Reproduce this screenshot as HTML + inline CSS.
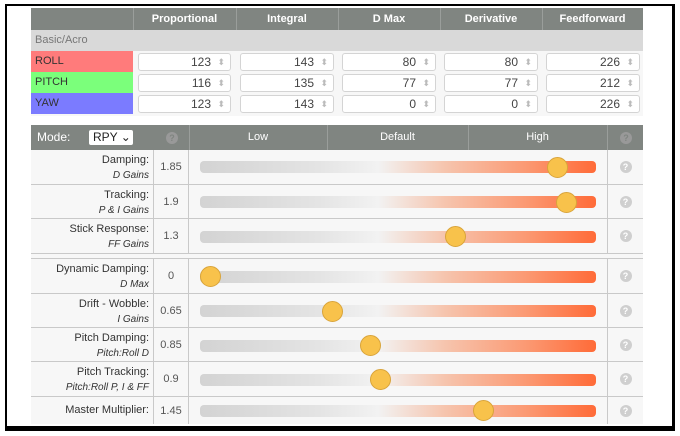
<!DOCTYPE html>
<html><head><meta charset="utf-8"><style>
*{box-sizing:border-box;margin:0;padding:0}
body{width:680px;height:436px;background:#fff;position:relative;overflow:hidden;font-family:"Liberation Sans",sans-serif;}
.frame{position:absolute;left:5px;top:4px;width:670px;height:427px;border:2px solid #000;border-bottom-width:5px;border-right-width:3px;background:#fff}
.a{position:absolute}
.hd{background:#808581;color:#fff;font-size:11px;font-weight:bold;text-align:center;line-height:22px;}
.sep{position:absolute;width:1px;background:#9a9e9b}
.inp{position:absolute;height:18px;background:#fff;border:1px solid #d4d4d4;border-radius:3px;font-size:12px;color:#444;text-align:right;padding-right:19px;line-height:16px}
.inp:after{content:"⬍";position:absolute;right:5px;top:0;font-size:9px;color:#bbb}
.lbl{position:absolute;left:31px;width:102px;height:21px;font-size:11px;line-height:21px;padding-left:4px;color:#333}
.row{position:absolute;left:31px;width:612px;background:#f7f7f7;border-bottom:1px solid #c9c9c9}
.rl{position:absolute;left:0;width:122px;text-align:right;padding-right:4px;font-size:11px;color:#333;line-height:15px;top:3px}
.rl i{font-size:10px}
.rv{position:absolute;left:122px;width:36px;height:100%;border-left:1px solid #c9c9c9;border-right:1px solid #c9c9c9;font-size:11px;color:#555;text-align:center;display:flex;align-items:center;justify-content:center}
.tr{position:absolute;left:169px;width:396px;height:12px;border-radius:4px;background:linear-gradient(to right,#d3d3d3 0%,#e4e4e4 30%,#f2f2f2 45%,#f6c4ad 62%,#fb9a74 82%,#ff6b38 100%)}
.th{position:absolute;width:21px;height:21px;border-radius:50%;background:#f8c24b;border:1px solid #d9a43a}
.q{position:absolute;left:576px;width:36px;height:100%;border-left:1px solid #c9c9c9;display:flex;align-items:center;justify-content:center}
.q span,.qh{width:12px;height:12px;border-radius:50%;background:#cfcfcf;color:#fff;font-size:9px;font-weight:bold;text-align:center;line-height:12px}
</style></head><body>
<div class="frame"></div>
<!-- PID table -->
<div class="a hd" style="left:31px;top:8px;width:612px;height:22px"></div>
<div class="a hd" style="left:133px;top:8px;width:103px">Proportional</div>
<div class="a hd" style="left:236px;top:8px;width:102px">Integral</div>
<div class="a hd" style="left:338px;top:8px;width:102px">D Max</div>
<div class="a hd" style="left:440px;top:8px;width:102px">Derivative</div>
<div class="a hd" style="left:542px;top:8px;width:101px">Feedforward</div>
<div class="sep" style="left:133px;top:8px;height:22px"></div><div class="sep" style="left:236px;top:8px;height:22px"></div><div class="sep" style="left:338px;top:8px;height:22px"></div><div class="sep" style="left:440px;top:8px;height:22px"></div><div class="sep" style="left:542px;top:8px;height:22px"></div>
<div class="a" style="left:31px;top:30px;width:612px;height:21px;background:#d9d9d9;font-size:11px;color:#777;line-height:21px;padding-left:4px">Basic/Acro</div>
<div class="a" style="left:31px;top:51px;width:612px;height:65px;background:#f7f7f7"></div>
<div class="lbl" style="top:51px;background:#ff7b7b">ROLL</div>
<div class="lbl" style="top:72px;background:#7bff7b">PITCH</div>
<div class="lbl" style="top:93px;background:#7b7bff">YAW</div>
<div class="inp" style="left:138px;top:53px;width:93px">123</div><div class="inp" style="left:240px;top:53px;width:94px">143</div><div class="inp" style="left:342px;top:53px;width:94px">80</div><div class="inp" style="left:444px;top:53px;width:94px">80</div><div class="inp" style="left:546px;top:53px;width:94px">226</div>
<div class="inp" style="left:138px;top:74px;width:93px">116</div><div class="inp" style="left:240px;top:74px;width:94px">135</div><div class="inp" style="left:342px;top:74px;width:94px">77</div><div class="inp" style="left:444px;top:74px;width:94px">77</div><div class="inp" style="left:546px;top:74px;width:94px">212</div>
<div class="inp" style="left:138px;top:95px;width:93px">123</div><div class="inp" style="left:240px;top:95px;width:94px">143</div><div class="inp" style="left:342px;top:95px;width:94px">0</div><div class="inp" style="left:444px;top:95px;width:94px">0</div><div class="inp" style="left:546px;top:95px;width:94px">226</div>
<!-- slider header -->
<div class="a hd" style="left:31px;top:125px;width:612px;height:25px;line-height:25px;font-weight:normal"></div>
<div class="a" style="left:37px;top:125px;line-height:25px;color:#fff;font-size:12px">Mode:</div>
<div class="a" style="left:89px;top:130px;width:44px;height:15px;background:#fff;border-radius:2px;font-size:12px;line-height:15px;padding-left:4px;color:#222">RPY ⌄</div>
<div class="a qh" style="left:166px;top:132px;background:#999;color:#808581">?</div>
<div class="a hd" style="left:189px;top:125px;width:138px;height:25px;line-height:25px;font-weight:normal">Low</div>
<div class="a hd" style="left:327px;top:125px;width:141px;height:25px;line-height:25px;font-weight:normal">Default</div>
<div class="a hd" style="left:468px;top:125px;width:139px;height:25px;line-height:25px;font-weight:normal">High</div>
<div class="a qh" style="left:620px;top:132px;background:#999;color:#808581">?</div>
<div class="sep" style="left:189px;top:125px;height:25px"></div><div class="sep" style="left:327px;top:125px;height:25px"></div><div class="sep" style="left:468px;top:125px;height:25px"></div><div class="sep" style="left:607px;top:125px;height:25px"></div>
<!-- rows -->
<div class="row" style="top:150px;height:35px"><div class="rl">Damping:<br><i>D Gains</i></div><div class="rv">1.85</div><div class="tr" style="top:11px"></div><div class="th" style="left:516px;top:7px"></div><div class="q"><span>?</span></div></div>
<div class="row" style="top:185px;height:34px"><div class="rl">Tracking:<br><i>P &amp; I Gains</i></div><div class="rv">1.9</div><div class="tr" style="top:11px"></div><div class="th" style="left:525px;top:7px"></div><div class="q"><span>?</span></div></div>
<div class="row" style="top:219px;height:35px"><div class="rl">Stick Response:<br><i>FF Gains</i></div><div class="rv">1.3</div><div class="tr" style="top:12px"></div><div class="th" style="left:414px;top:7px"></div><div class="q"><span>?</span></div></div>
<div class="a" style="left:31px;top:254px;width:612px;height:5px;background:#f7f7f7;border-bottom:1px solid #c9c9c9"></div>
<div class="row" style="top:259px;height:35px"><div class="rl">Dynamic Damping:<br><i>D Max</i></div><div class="rv">0</div><div class="tr" style="top:12px"></div><div class="th" style="left:169px;top:7px"></div><div class="q"><span>?</span></div></div>
<div class="row" style="top:294px;height:34px"><div class="rl">Drift - Wobble:<br><i>I Gains</i></div><div class="rv">0.65</div><div class="tr" style="top:11px"></div><div class="th" style="left:291px;top:7px"></div><div class="q"><span>?</span></div></div>
<div class="row" style="top:328px;height:34px"><div class="rl">Pitch Damping:<br><i>Pitch:Roll D</i></div><div class="rv">0.85</div><div class="tr" style="top:12px"></div><div class="th" style="left:329px;top:7px"></div><div class="q"><span>?</span></div></div>
<div class="row" style="top:362px;height:35px"><div class="rl">Pitch Tracking:<br><i>Pitch:Roll P, I &amp; FF</i></div><div class="rv">0.9</div><div class="tr" style="top:12px"></div><div class="th" style="left:339px;top:7px"></div><div class="q"><span>?</span></div></div>
<div class="row" style="top:397px;height:27px;border-bottom:none"><div class="rl" style="top:6px">Master Multiplier:</div><div class="rv">1.45</div><div class="tr" style="top:8px"></div><div class="th" style="left:442px;top:3px"></div><div class="q"><span>?</span></div></div>
</body></html>
